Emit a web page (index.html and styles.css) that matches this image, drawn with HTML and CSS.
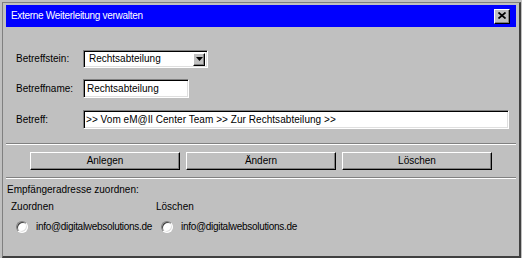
FILE: index.html
```html
<!DOCTYPE html>
<html>
<head>
<meta charset="utf-8">
<link rel="stylesheet" href="styles.css">
</head>
<body>
<div class="window">
  <div class="titlebar">
    <span class="title">Externe Weiterleitung verwalten</span>
    <span class="close"><svg width="8" height="7" viewBox="0 0 8 7"><path d="M0.5 0.5L7.5 6.5M7.5 0.5L0.5 6.5" stroke="#000" stroke-width="1.7" fill="none"/></svg></span>
  </div>
  <div class="form">
    <div class="row r1">
      <span class="label">Betreffstein:</span>
      <div class="field select"><span class="val">Rechtsabteilung</span><span class="arrow"><svg width="7" height="4" viewBox="0 0 7 4"><path d="M0 0H7L3.5 4Z" fill="#000"/></svg></span></div>
    </div>
    <div class="row r2">
      <span class="label">Betreffname:</span>
      <div class="field name">Rechtsabteilung</div>
    </div>
    <div class="row r3">
      <span class="label">Betreff:</span>
      <div class="field subject">&gt;&gt; Vom eM@Il Center Team &gt;&gt; Zur Rechtsabteilung &gt;&gt;</div>
    </div>
  </div>
  <div class="sep sep1"></div>
  <div class="buttons">
    <span class="btn">Anlegen</span>
    <span class="btn">Ändern</span>
    <span class="btn">Löschen</span>
  </div>
  <div class="sep sep2"></div>
  <div class="assign">
    <div class="heading">Empfängeradresse zuordnen:</div>
    <div class="cols">
      <div class="col">
        <div class="colhead">Zuordnen</div>
        <div class="opt"><span class="radio"></span><span class="addr">info@digitalwebsolutions.de</span></div>
      </div>
      <div class="col">
        <div class="colhead">Löschen</div>
        <div class="opt"><span class="radio"></span><span class="addr">info@digitalwebsolutions.de</span></div>
      </div>
    </div>
  </div>
</div>
</body>
</html>
```
FILE: styles.css
```css
html, body {
  margin: 0;
  padding: 0;
  background: #c0c0c0;
}
body {
  width: 522px;
  height: 258px;
  overflow: hidden;
  font-family: "Liberation Sans", Arial, sans-serif;
  font-size: 10px;
  color: #000;
}
.window {
  box-sizing: border-box;
  margin: 2px 0 0 2px;
  width: 519px;
  height: 256px;
  border-left: 1px solid #808080;
  border-top: 1px solid #808080;
  border-right: 2px solid #404040;
  border-bottom: 2px solid #404040;
  padding: 2px 3px 0 3px;
  background: #c0c0c0;
}
.titlebar {
  height: 22px;
  background: #0000ff;
  display: flex;
  align-items: center;
  padding: 0 6px 0 5px;
}
.title {
  color: #fff;
  font-size: 10px;
  letter-spacing: -0.3px;
  line-height: 12px;
}
.close {
  margin-left: auto;
  box-sizing: border-box;
  width: 16px;
  height: 15px;
  background: #c0c0c0;
  border: 1px solid;
  border-color: #fff #000 #000 #fff;
  box-shadow: inset -1px -1px #808080;
  display: flex;
  align-items: center;
  justify-content: center;
}
.close svg { display: block; margin-top: -1px; }
.form {
  padding: 23px 0 0 10px;
}
.row {
  display: flex;
  align-items: center;
}
.r1 { height: 18px; margin-bottom: 11px; }
.r2 { height: 19px; margin-bottom: 12px; }
.r3 { height: 19px; }
.label {
  width: 67px;
  line-height: 12px;
}
.field {
  box-sizing: border-box;
  background: #fff;
  border: 1px solid;
  border-color: #808080 #fff #fff #808080;
  box-shadow: inset 1px 1px #000, inset -1px -1px #dfdfdf;
  display: flex;
  align-items: center;
  line-height: 12px;
  white-space: nowrap;
}
.select {
  width: 125px;
  height: 18px;
  padding: 2px 2px 2px 5px;
}
.select .val { flex: 1; }
.arrow {
  box-sizing: border-box;
  width: 12px;
  height: 13px;
  background: #c0c0c0;
  border: 1px solid;
  border-color: #fff #000 #000 #fff;
  box-shadow: inset -1px -1px #808080;
  display: flex;
  align-items: center;
  justify-content: center;
}
.arrow svg { display: block; }
.name {
  width: 106px;
  height: 19px;
  padding-left: 3px;
}
.subject {
  width: 426px;
  height: 19px;
  padding-left: 2px;
  letter-spacing: 0.05px;
}
.sep {
  height: 1px;
  border-top: 1px solid #808080;
  background: #fff;
}
.sep1 { margin-top: 14px; }
.sep2 { margin-top: 7px; }
.buttons {
  display: flex;
  gap: 6px;
  padding: 7px 0 0 24px;
}
.btn {
  box-sizing: border-box;
  width: 150px;
  height: 18px;
  border: 1px solid;
  border-color: #fff #000 #000 #fff;
  box-shadow: inset -1px -1px #808080;
  display: flex;
  align-items: center;
  justify-content: center;
  line-height: 12px;
}
.assign {
  padding: 5px 0 0 1px;
}
.heading {
  line-height: 12px;
}
.cols {
  display: grid;
  grid-template-columns: 145px auto;
  padding: 5px 0 0 4px;
}
.colhead {
  line-height: 12px;
}
.opt {
  display: flex;
  align-items: center;
  height: 14px;
  margin-top: 7px;
  padding-left: 5px;
}
.radio {
  box-sizing: border-box;
  width: 12px;
  height: 12px;
  border-radius: 50%;
  background: #fff;
  border: 1px solid;
  border-color: #808080 #fff #fff #808080;
  box-shadow: inset 1px 1px #404040, inset -1px -1px #dfdfdf;
}
.addr {
  margin-left: 8px;
  letter-spacing: -0.3px;
  line-height: 12px;
  white-space: nowrap;
}
```
